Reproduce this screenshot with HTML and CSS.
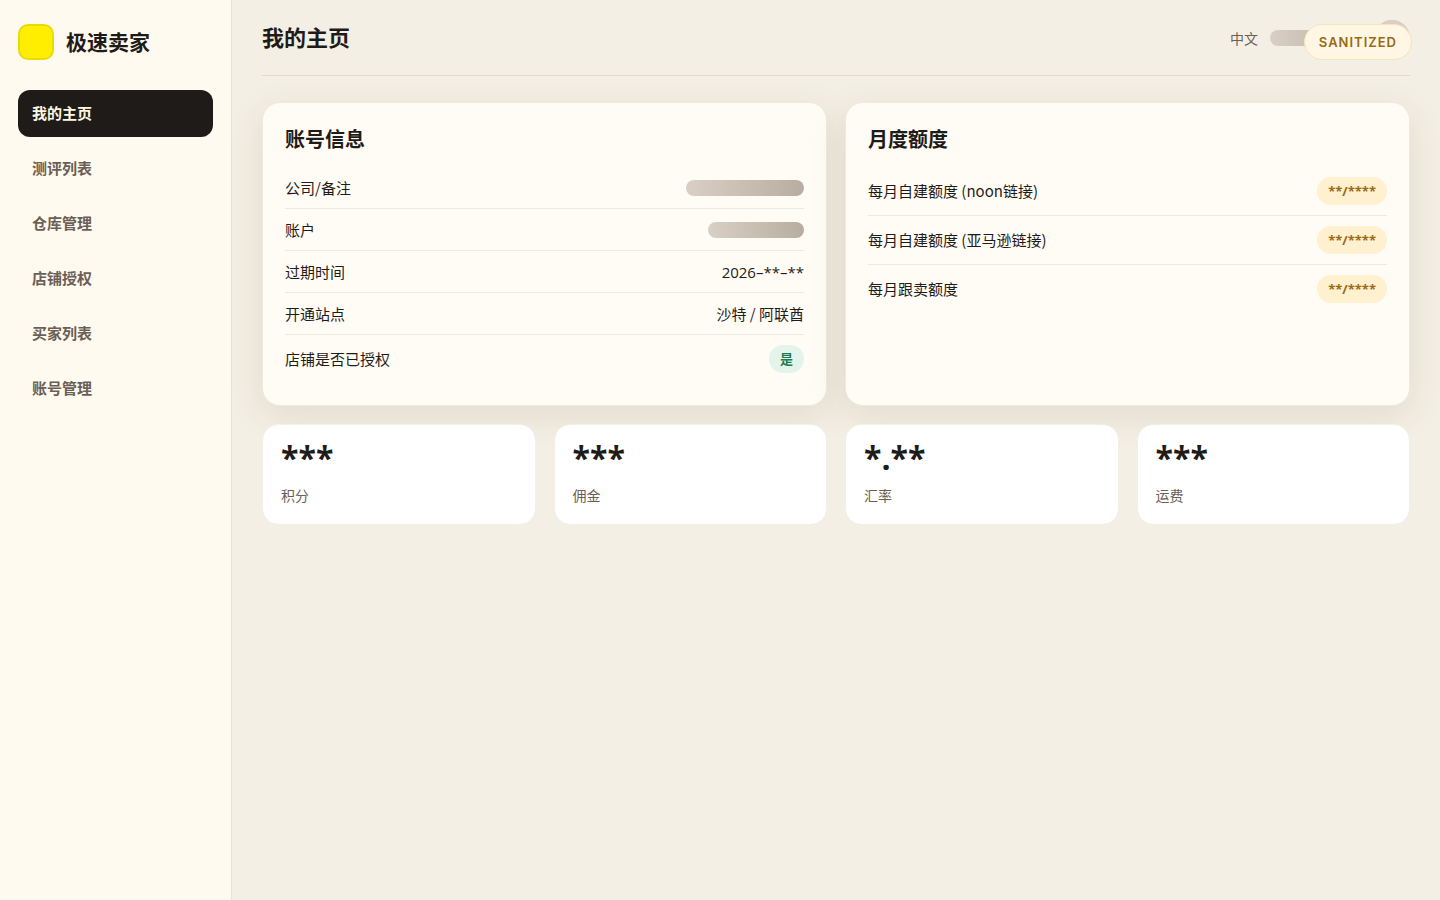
FILE: index.html
```
<!DOCTYPE html>
<html lang="zh-CN">
<head>
    <meta charset="UTF-8">
    <meta name="viewport" content="width=device-width, initial-scale=1.0">
    <title>我的主页 - 极速卖家</title>
    <link rel="stylesheet" href="styles.css">
</head>
<body>
    <div class="sanitized">SANITIZED</div>
    <div class="layout">
        <aside class="sidebar">
            <div class="brand">
                <span class="logo"></span>
                <span class="brand-name">极速卖家</span>
            </div>
            <nav class="nav">
                <a class="active" href="#">我的主页</a>
                <a href="#">测评列表</a>
                <a href="#">仓库管理</a>
                <a href="#">店铺授权</a>
                <a href="#">买家列表</a>
                <a href="#">账号管理</a>
            </nav>
        </aside>

        <main class="main">
            <header class="topbar">
                <h1>我的主页</h1>
                <div class="user">
                    <span>中文</span>
                    <span class="mask mask-name"></span>
                    <span class="avatar"></span>
                </div>
            </header>

            <div class="cards">
                <section class="card">
                    <h2>账号信息</h2>
                    <div class="row"><span>公司/备注</span><span class="mask mask-long"></span></div>
                    <div class="row"><span>账户</span><span class="mask mask-short"></span></div>
                    <div class="row"><span>过期时间</span><span class="date">2026–**–**</span></div>
                    <div class="row"><span>开通站点</span><span>沙特 / 阿联酋</span></div>
                    <div class="row"><span>店铺是否已授权</span><span class="pill ok">是</span></div>
                </section>
                <section class="card">
                    <h2>月度额度</h2>
                    <div class="row"><span>每月自建额度 (noon链接)</span><span class="pill">**/****</span></div>
                    <div class="row"><span>每月自建额度 (亚马逊链接)</span><span class="pill">**/****</span></div>
                    <div class="row"><span>每月跟卖额度</span><span class="pill">**/****</span></div>
                </section>
            </div>

            <div class="stats">
                <div class="stat"><div class="value">***</div><div class="label">积分</div></div>
                <div class="stat"><div class="value">***</div><div class="label">佣金</div></div>
                <div class="stat"><div class="value">*.**</div><div class="label">汇率</div></div>
                <div class="stat"><div class="value">***</div><div class="label">运费</div></div>
            </div>
        </main>
    </div>
</body>
</html>
```
FILE: styles.css
```
* {
    box-sizing: border-box;
    margin: 0;
    padding: 0;
}
body {
    font-family: "Noto Sans CJK SC", sans-serif;
    font-size: 15px;
    line-height: 20px;
    color: #1f1b18;
    background: #f4efe4;
}
.layout {
    display: grid;
    grid-template-columns: 232px 1fr;
    min-height: 100vh;
}
.sidebar {
    padding: 24px 18px;
    background: #fffaf0;
    border-right: 1px solid #e6e0d5;
}
.brand {
    display: flex;
    align-items: center;
    gap: 12px;
    margin-bottom: 30px;
}
.logo {
    width: 36px;
    height: 36px;
    border-radius: 10px;
    background: #ffee00;
    border: 2px solid #e9da0a;
}
.brand-name {
    font-size: 21px;
    line-height: 34px;
    padding-bottom: 2px;
    font-weight: 700;
}
.nav {
    display: flex;
    flex-direction: column;
    gap: 8px;
}
.nav a {
    padding: 13px 14px 14px;
    border-radius: 12px;
    font-weight: 700;
    color: #6b5f55;
    text-decoration: none;
}
.nav a.active {
    background: #1f1b18;
    color: #fff8e1;
}
.main {
    padding: 20px 30px;
}
.topbar {
    display: flex;
    justify-content: space-between;
    align-items: flex-start;
    padding-bottom: 19px;
    margin-bottom: 26px;
    border-bottom: 1px solid #e0dacf;
}
h1 {
    font-size: 22px;
    line-height: 32px;
}
.user {
    display: flex;
    align-items: center;
    gap: 12px;
    font-size: 14px;
    color: #6b5f55;
}
.mask {
    height: 16px;
    border-radius: 8px;
    background: linear-gradient(90deg, #d9cfc4, #b8ada1);
}
.mask-name {
    width: 92px;
}
.mask-long {
    width: 118px;
}
.mask-short {
    width: 96px;
}
.avatar {
    width: 36px;
    height: 36px;
    border-radius: 50%;
    background: #d9cfc4;
}
.sanitized {
    position: fixed;
    top: 24px;
    right: 28px;
    z-index: 10;
    padding: 7px 14px;
    border: 1px solid #f8e2b8;
    border-radius: 18px;
    background: #fff7e4;
    font-family: Inter, sans-serif;
    font-size: 13px;
    font-weight: 600;
    letter-spacing: 1px;
    color: #9a6a14;
}
.cards {
    display: grid;
    grid-template-columns: 1fr 1fr;
    gap: 18px;
    margin-bottom: 18px;
}
.card {
    padding: 22px;
    border: 1px solid #f0eade;
    border-radius: 18px;
    background: #fffcf5;
    box-shadow: 0 10px 36px rgba(60, 45, 20, 0.1);
}
h2 {
    font-size: 20px;
    line-height: 28px;
    margin-bottom: 14px;
}
.row {
    display: flex;
    justify-content: space-between;
    align-items: center;
    min-height: 42px;
    padding: 10px 0;
    border-bottom: 1px solid #eee9e0;
}
.row:last-child {
    border-bottom: none;
}
.date {
    font-family: "Open Sans", sans-serif;
}
.pill {
    padding: 4px 11px;
    border-radius: 14px;
    background: #fff0cf;
    font-family: "Open Sans", "Noto Sans CJK SC", sans-serif;
    font-size: 13px;
    font-weight: 700;
    color: #9a6a14;
}
.pill.ok {
    background: #e3f4ea;
    color: #1c7a50;
}
.stats {
    display: grid;
    grid-template-columns: repeat(4, 1fr);
    gap: 18px;
}
.stat {
    padding: 18px 18px 19px;
    border: 1px solid #f3eee6;
    border-radius: 16px;
    background: #fff;
}
.value {
    font-family: "Open Sans", sans-serif;
    font-size: 32px;
    line-height: 30px;
    font-weight: 700;
    margin-bottom: 12px;
}
.label {
    font-size: 14px;
    color: #6b5f55;
}
```
